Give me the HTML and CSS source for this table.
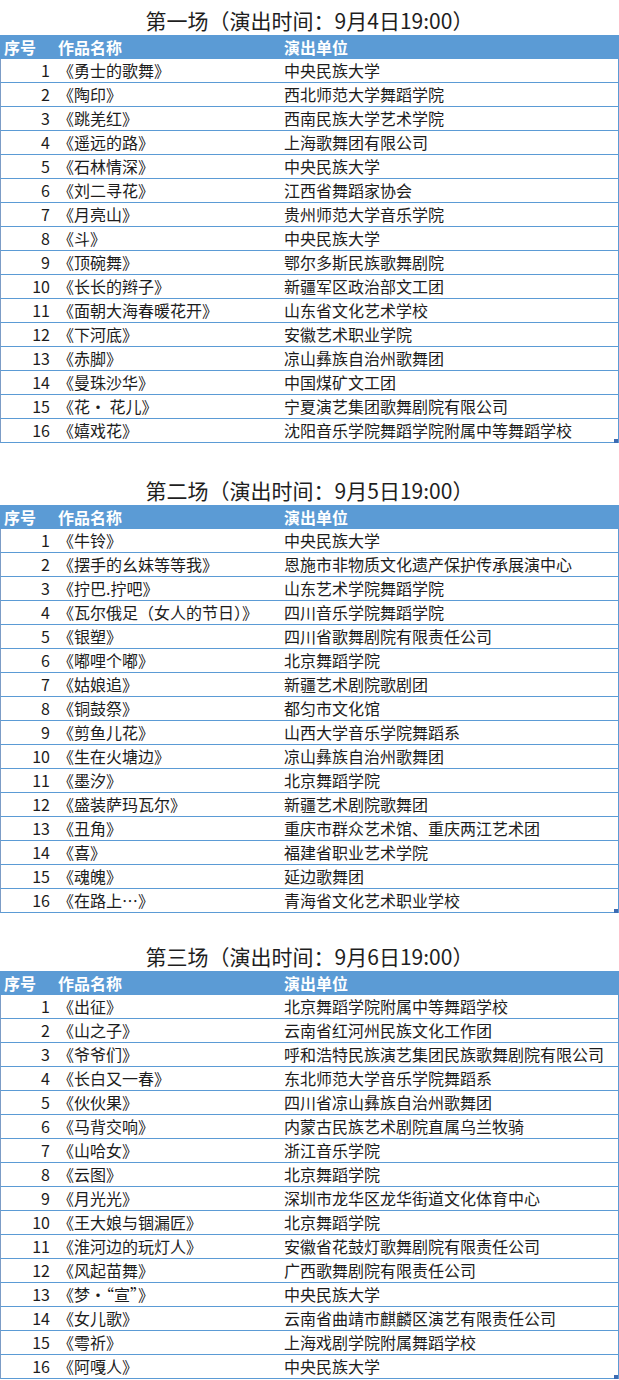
FILE: index.html
```html
<!DOCTYPE html>
<html lang="zh-CN">
<head>
<meta charset="utf-8">
<title>演出安排</title>
<link rel="stylesheet" href="styles.css">
</head>
<body>
<section class="show show-first">
  <h2 class="show-title">第一场（演出时间：9月4日19:00）</h2>
  <div class="table-wrap">
    <table class="program">
      <colgroup><col class="c-no"><col class="c-work"><col class="c-unit"></colgroup>
      <thead><tr><th class="h-no">序号</th><th>作品名称</th><th>演出单位</th></tr></thead>
      <tbody>
        <tr><td class="no">1</td><td>《勇士的歌舞》</td><td>中央民族大学</td></tr>
        <tr><td class="no">2</td><td>《陶印》</td><td>西北师范大学舞蹈学院</td></tr>
        <tr><td class="no">3</td><td>《跳羌红》</td><td>西南民族大学艺术学院</td></tr>
        <tr><td class="no">4</td><td>《遥远的路》</td><td>上海歌舞团有限公司</td></tr>
        <tr><td class="no">5</td><td>《石林情深》</td><td>中央民族大学</td></tr>
        <tr><td class="no">6</td><td>《刘二寻花》</td><td>江西省舞蹈家协会</td></tr>
        <tr><td class="no">7</td><td>《月亮山》</td><td>贵州师范大学音乐学院</td></tr>
        <tr><td class="no">8</td><td>《斗》</td><td>中央民族大学</td></tr>
        <tr><td class="no">9</td><td>《顶碗舞》</td><td>鄂尔多斯民族歌舞剧院</td></tr>
        <tr><td class="no">10</td><td>《长长的辫子》</td><td>新疆军区政治部文工团</td></tr>
        <tr><td class="no">11</td><td>《面朝大海春暖花开》</td><td>山东省文化艺术学校</td></tr>
        <tr><td class="no">12</td><td>《下河底》</td><td>安徽艺术职业学院</td></tr>
        <tr><td class="no">13</td><td>《赤脚》</td><td>凉山彝族自治州歌舞团</td></tr>
        <tr><td class="no">14</td><td>《曼珠沙华》</td><td>中国煤矿文工团</td></tr>
        <tr><td class="no">15</td><td>《花· 花儿》</td><td>宁夏演艺集团歌舞剧院有限公司</td></tr>
        <tr><td class="no">16</td><td>《嬉戏花》</td><td>沈阳音乐学院舞蹈学院附属中等舞蹈学校</td></tr>
      </tbody>
    </table>
    <span class="handle"></span>
  </div>
</section>

<section class="show show-second">
  <h2 class="show-title">第二场（演出时间：9月5日19:00）</h2>
  <div class="table-wrap">
    <table class="program">
      <colgroup><col class="c-no"><col class="c-work"><col class="c-unit"></colgroup>
      <thead><tr><th class="h-no">序号</th><th>作品名称</th><th>演出单位</th></tr></thead>
      <tbody>
        <tr><td class="no">1</td><td>《牛铃》</td><td>中央民族大学</td></tr>
        <tr><td class="no">2</td><td>《摆手的幺妹等等我》</td><td>恩施市非物质文化遗产保护传承展演中心</td></tr>
        <tr><td class="no">3</td><td>《拧巴.拧吧》</td><td>山东艺术学院舞蹈学院</td></tr>
        <tr><td class="no">4</td><td>《瓦尔俄足（女人的节日）》</td><td>四川音乐学院舞蹈学院</td></tr>
        <tr><td class="no">5</td><td>《银塑》</td><td>四川省歌舞剧院有限责任公司</td></tr>
        <tr><td class="no">6</td><td>《嘟哩个嘟》</td><td>北京舞蹈学院</td></tr>
        <tr><td class="no">7</td><td>《姑娘追》</td><td>新疆艺术剧院歌剧团</td></tr>
        <tr><td class="no">8</td><td>《铜鼓祭》</td><td>都匀市文化馆</td></tr>
        <tr><td class="no">9</td><td>《剪鱼儿花》</td><td>山西大学音乐学院舞蹈系</td></tr>
        <tr><td class="no">10</td><td>《生在火塘边》</td><td>凉山彝族自治州歌舞团</td></tr>
        <tr><td class="no">11</td><td>《墨汐》</td><td>北京舞蹈学院</td></tr>
        <tr><td class="no">12</td><td>《盛装萨玛瓦尔》</td><td>新疆艺术剧院歌舞团</td></tr>
        <tr><td class="no">13</td><td>《丑角》</td><td>重庆市群众艺术馆、重庆两江艺术团</td></tr>
        <tr><td class="no">14</td><td>《喜》</td><td>福建省职业艺术学院</td></tr>
        <tr><td class="no">15</td><td>《魂魄》</td><td>延边歌舞团</td></tr>
        <tr><td class="no">16</td><td>《在路上…》</td><td>青海省文化艺术职业学校</td></tr>
      </tbody>
    </table>
    <span class="handle"></span>
  </div>
</section>

<section class="show show-third">
  <h2 class="show-title">第三场（演出时间：9月6日19:00）</h2>
  <div class="table-wrap">
    <table class="program">
      <colgroup><col class="c-no"><col class="c-work"><col class="c-unit"></colgroup>
      <thead><tr><th class="h-no">序号</th><th>作品名称</th><th>演出单位</th></tr></thead>
      <tbody>
        <tr><td class="no">1</td><td>《出征》</td><td>北京舞蹈学院附属中等舞蹈学校</td></tr>
        <tr><td class="no">2</td><td>《山之子》</td><td>云南省红河州民族文化工作团</td></tr>
        <tr><td class="no">3</td><td>《爷爷们》</td><td>呼和浩特民族演艺集团民族歌舞剧院有限公司</td></tr>
        <tr><td class="no">4</td><td>《长白又一春》</td><td>东北师范大学音乐学院舞蹈系</td></tr>
        <tr><td class="no">5</td><td>《伙伙果》</td><td>四川省凉山彝族自治州歌舞团</td></tr>
        <tr><td class="no">6</td><td>《马背交响》</td><td>内蒙古民族艺术剧院直属乌兰牧骑</td></tr>
        <tr><td class="no">7</td><td>《山哈女》</td><td>浙江音乐学院</td></tr>
        <tr><td class="no">8</td><td>《云图》</td><td>北京舞蹈学院</td></tr>
        <tr><td class="no">9</td><td>《月光光》</td><td>深圳市龙华区龙华街道文化体育中心</td></tr>
        <tr><td class="no">10</td><td>《王大娘与锢漏匠》</td><td>北京舞蹈学院</td></tr>
        <tr><td class="no">11</td><td>《淮河边的玩灯人》</td><td>安徽省花鼓灯歌舞剧院有限责任公司</td></tr>
        <tr><td class="no">12</td><td>《风起苗舞》</td><td>广西歌舞剧院有限责任公司</td></tr>
        <tr><td class="no">13</td><td>《梦·“宣”》</td><td>中央民族大学</td></tr>
        <tr><td class="no">14</td><td>《女儿歌》</td><td>云南省曲靖市麒麟区演艺有限责任公司</td></tr>
        <tr><td class="no">15</td><td>《雩祈》</td><td>上海戏剧学院附属舞蹈学校</td></tr>
        <tr><td class="no">16</td><td>《阿嘎人》</td><td>中央民族大学</td></tr>
      </tbody>
    </table>
    <span class="handle"></span>
  </div>
</section>
</body>
</html>
```

FILE: styles.css
```css
html, body {
  margin: 0;
  padding: 0;
  background: #ffffff;
}

body {
  width: 619px;
  font-family: "Noto Sans CJK SC", "Liberation Sans", sans-serif;
  color: #1c1c1c;
}

.show-second { margin-top: 27px; }
.show-third { margin-top: 23px; }

.show-title {
  margin: 0;
  padding-top: 5px;
  height: 30px;
  line-height: 30px;
  font-size: 21px;
  font-weight: normal;
  text-align: center;
  color: #1e1e1e;
}

.table-wrap {
  position: relative;
  width: 619px;
}

.program {
  width: 619px;
  table-layout: fixed;
  border-collapse: separate;
  border-spacing: 0;
  font-size: 16px;
}

.c-no { width: 54px; }
.c-work { width: 226px; }

.program th {
  height: 24px;
  padding: 0 0 0 4px;
  line-height: 24px;
  background: #5b9bd5;
  color: #ffffff;
  font-weight: bold;
  text-align: left;
  white-space: nowrap;
}

.program td {
  height: 23px;
  padding: 0 0 0 4px;
  line-height: 23px;
  border-bottom: 1px solid #5b9bd5;
  white-space: nowrap;
  overflow: hidden;
}

.program td:first-child {
  border-left: 1px solid #7c9cc6;
}

.program td:last-child {
  border-right: 1px solid #5b9bd5;
}

.program td.no {
  text-align: right;
  padding: 0 4px 0 0;
}

.handle {
  position: absolute;
  right: 1px;
  bottom: 0;
  width: 4px;
  height: 4px;
  background: #3d6cb3;
}
```
